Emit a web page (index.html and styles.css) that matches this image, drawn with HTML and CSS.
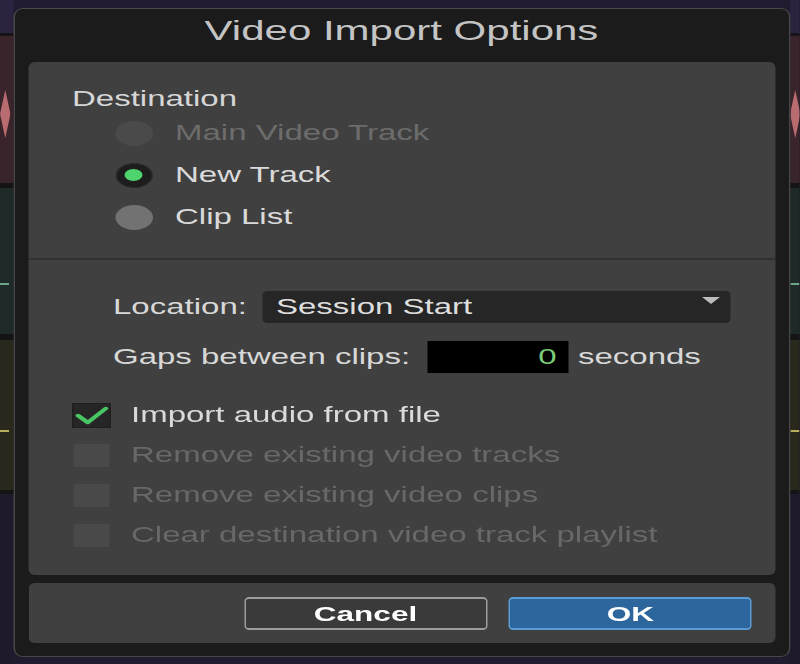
FILE: index.html
```html
<!DOCTYPE html>
<html>
<head>
<meta charset="utf-8">
<link rel="stylesheet" href="styles.css">
</head>
<body>
<div class="stage">
  <div class="tracks left">
    <div class="t-top"></div>
    <div class="track red"><span class="wave"></span></div>
    <div class="track green"><span class="tick green-tick"></span></div>
    <div class="track olive"><span class="tick olive-tick"></span></div>
    <div class="t-bottom"></div>
  </div>

  <div class="dialog">
    <div class="title">Video Import Options</div>

    <div class="panel">
      <div class="section-label">Destination</div>
      <div class="radios">
        <div class="radio-row disabled"><span class="radio"></span><span class="label">Main Video Track</span></div>
        <div class="radio-row"><span class="radio on"><span class="dot"></span></span><span class="label">New Track</span></div>
        <div class="radio-row"><span class="radio off"></span><span class="label">Clip List</span></div>
      </div>

      <div class="divider"></div>

      <div class="field-row loc-row">
        <span class="field-label loc-label">Location:</span>
        <div class="dropdown"><span>Session Start</span><span class="tri"></span></div>
      </div>
      <div class="field-row gaps-row">
        <span class="field-label gaps-label">Gaps between clips:</span>
        <div class="numbox">0</div>
        <span class="unit">seconds</span>
      </div>

      <div class="checks">
        <div class="check-row">
          <span class="box checked">
            <svg viewBox="0 0 26 25" width="26" height="25"><path d="M4 12.5 L10.5 19.5 L22.5 5.5" fill="none" stroke="#48c663" stroke-width="3.4" stroke-linecap="round" stroke-linejoin="round"/></svg>
          </span>
          <span class="label">Import audio from file</span>
        </div>
        <div class="check-row disabled"><span class="box"></span><span class="label">Remove existing video tracks</span></div>
        <div class="check-row disabled"><span class="box"></span><span class="label">Remove existing video clips</span></div>
        <div class="check-row disabled"><span class="box"></span><span class="label">Clear destination video track playlist</span></div>
      </div>
    </div>

    <div class="footer">
      <button class="btn cancel">Cancel</button>
      <button class="btn ok">OK</button>
    </div>
  </div>

  <div class="tracks right">
    <div class="t-top"></div>
    <div class="track red"><span class="wave"></span></div>
    <div class="track green"><span class="tick green-tick"></span></div>
    <div class="track olive"><span class="tick olive-tick"></span></div>
    <div class="t-bottom"></div>
  </div>
</div>
</body>
</html>
```

FILE: styles.css
```css
html, body {
  margin: 0;
  padding: 0;
}
body {
  background: #221b2f;
  font-family: "Liberation Sans", Arial, sans-serif;
  overflow: hidden;
}

/* the whole picture is horizontally stretched 1.5x */
.stage {
  width: 533.33px;
  height: 664px;
  display: flex;
  transform: scaleX(1.5);
  transform-origin: 0 0;
}

/* background tracks */
.tracks {
  flex: none;
  display: flex;
  flex-direction: column;
  height: 664px;
}
.tracks.left { width: 8.67px; }
.tracks.right { width: 6.67px; }
.t-top {
  height: 33px;
  background: #2c2340;
  border-bottom: 3px solid #151417;
}
.track {
  position: relative;
  overflow: hidden;
}
.track.red {
  height: 147px;
  background: #38242a;
  border-bottom: 5px solid #141414;
}
.track.green {
  height: 146px;
  background: #1d2a27;
  border-bottom: 6px solid #141414;
}
.track.olive {
  height: 150px;
  background: #29281d;
  border-bottom: 4px solid #141414;
}
.t-bottom {
  flex: 1;
  background: #1e1a2b;
}
.wave {
  position: absolute;
  top: 54px;
  left: 0;
  width: 7px;
  height: 48px;
  background: #b86c70;
  clip-path: polygon(50% 0, 100% 50%, 50% 100%, 0 50%);
}
.tick {
  position: absolute;
  left: 0;
  width: 6px;
  height: 2px;
}
.green-tick { top: 95px; background: #6fa58c; }
.olive-tick { top: 90px; background: #b9ad5e; }

/* dialog */
.dialog {
  flex: none;
  width: 518px;
  height: 649px;
  margin-top: 8px;
  box-sizing: border-box;
  background: #1b1b1b;
  border: 1px solid #484848;
  border-radius: 6px / 9px;
  padding: 0 9px 13px;
  display: flex;
  flex-direction: column;
}
.title {
  height: 53px;
  line-height: 44px;
  text-align: center;
  font-size: 28px;
  color: #c4c4c4;
}

.panel {
  height: 513px;
  box-sizing: border-box;
  background: #404040;
  border-radius: 4px / 6px;
  padding-top: 24px;
  font-size: 22px;
}
.section-label {
  padding-left: 29.33px;
  line-height: 26px;
  color: #d6d6d6;
}
.radios {
  padding-left: 58px;
}
.radio-row {
  height: 42px;
  display: flex;
  align-items: center;
  gap: 15px;
  color: #dadada;
}
.radio-row.disabled { color: #6c6c6c; }
.radio {
  width: 25px;
  height: 25px;
  border-radius: 50%;
  background: #4a4a4a;
  flex: none;
  display: flex;
  align-items: center;
  justify-content: center;
  box-sizing: border-box;
}
.radio.on {
  background: #1d1d1d;
  border: 1px solid #2c2c2c;
}
.radio.off { background: #727272; }
.dot {
  width: 12px;
  height: 12px;
  border-radius: 50%;
  background: #4fd36c;
}

.divider {
  margin-top: 20px;
  height: 2px;
  background: #313131;
}

.field-row {
  display: flex;
  align-items: center;
  height: 32px;
  padding-left: 56.67px;
  color: #d8d8d8;
}
.loc-row { margin-top: 31px; }
.gaps-row { margin-top: 18px; }
.loc-label { width: 100px; flex: none; }
.gaps-label { width: 210px; flex: none; }
.dropdown {
  width: 312px;
  height: 32px;
  box-sizing: border-box;
  background: #262626;
  border-radius: 3px / 4px;
  padding: 0 7.3px 0 8.67px;
  display: flex;
  align-items: center;
  justify-content: space-between;
  color: #dedede;
}
.tri {
  align-self: flex-start;
  margin-top: 6px;
  width: 0;
  height: 0;
  border-left: 6.5px solid transparent;
  border-right: 6.5px solid transparent;
  border-top: 7px solid #bdbdbd;
}
.numbox {
  width: 93.33px;
  height: 32px;
  box-sizing: border-box;
  background: #000;
  text-align: right;
  padding-right: 7.5px;
  line-height: 32px;
  color: #7ccc7c;
}
.unit {
  margin-left: 6.67px;
}

.checks {
  margin-top: 22px;
  padding-left: 29.33px;
}
.check-row {
  height: 40px;
  display: flex;
  align-items: center;
  gap: 13.33px;
  color: #dadada;
}
.check-row.disabled { color: #686868; }
.box {
  width: 26px;
  height: 25px;
  flex: none;
  box-sizing: border-box;
  background: #494949;
  border: 1px solid #3f3f3f;
  display: flex;
}
.box.checked {
  background: #262626;
  border: 1px solid #1f1f1f;
}
.box svg {
  display: block;
  margin: -1px;
}

.footer {
  margin-top: 8px;
  height: 60px;
  box-sizing: border-box;
  background: #404040;
  border-radius: 4px / 6px;
  padding: 14px 15.33px 0;
  display: flex;
  justify-content: flex-end;
  gap: 14.67px;
}
.btn {
  width: 162px;
  height: 33px;
  box-sizing: border-box;
  font-family: "Liberation Sans", Arial, sans-serif;
  font-weight: bold;
  font-size: 21px;
  color: #ffffff;
  border-radius: 3px / 4px;
  padding: 0;
  line-height: 29px;
}
.cancel {
  background: #3a3a3a;
  border-style: solid;
  border-color: #9c9c9c;
  border-width: 2px 1.33px;
}
.ok {
  background: #2c669c;
  border-style: solid;
  border-color: #5b9bd6;
  border-width: 2px 1.33px;
}
```
